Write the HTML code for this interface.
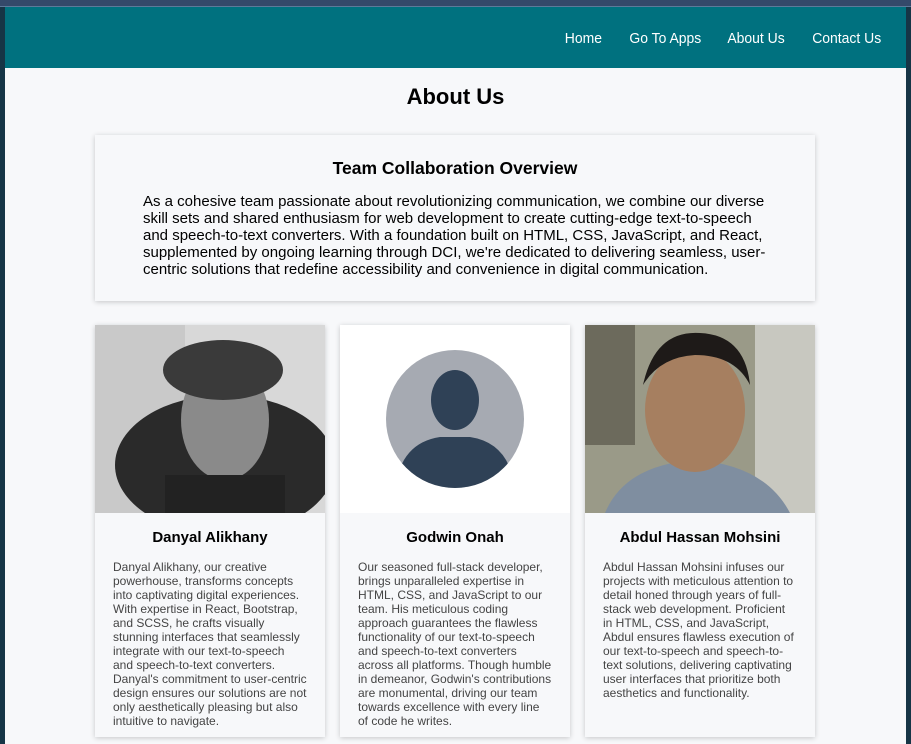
<!DOCTYPE html>
<html><head><meta charset="utf-8"><style>
*{box-sizing:border-box;margin:0;padding:0}
body{width:911px;height:744px;overflow:hidden;background:#163546;font-family:"Liberation Sans",sans-serif;position:relative}
.top{position:absolute;left:0;top:0;width:911px;height:7px;background:#34496a;border-bottom:1px solid #5d7a9a}
.page{position:absolute;left:5px;top:7px;width:901px;height:737px;background:#f7f8fa}
header{height:61px;background:#00717f;display:flex;justify-content:flex-end;align-items:center;padding-right:25px;padding-top:1px}
header a{color:#fff;font-size:15px;margin-left:22px;text-decoration:none;display:inline-block;transform:scaleX(.93);transform-origin:right}
h1{text-align:center;font-size:22px;margin-top:16px;color:#000}
.ov{position:absolute;left:90px;top:128px;width:720px;height:166px;background:#f7f8fa;box-shadow:0 1px 5px rgba(0,0,0,.2);padding:23px 48px 0}
.ov h2{text-align:center;font-size:17.5px;margin-bottom:14px}
.ov p{font-size:15px;line-height:17px;color:#000}
.card{position:absolute;top:318px;width:230px;height:412px;background:#f7f8fa;box-shadow:0 1px 5px rgba(0,0,0,.2)}
.img{height:188px;overflow:hidden}
.card h3{text-align:center;font-size:15px;margin-top:16px;margin-bottom:14px}
.card p{font-size:12px;line-height:14px;color:#444;padding:0 18px}
</style></head><body>
<div class="top"></div>
<div class="page">
<header><a>Home</a><a>Go To Apps</a><a>About Us</a><a>Contact Us</a></header>
<h1>About Us</h1>
<div class="ov"><h2>Team Collaboration Overview</h2><p>As a cohesive team passionate about revolutionizing communication, we combine our diverse skill sets and shared enthusiasm for web development to create cutting-edge text-to-speech and speech-to-text converters. With a foundation built on HTML, CSS, JavaScript, and React, supplemented by ongoing learning through DCI, we're dedicated to delivering seamless, user-centric solutions that redefine accessibility and convenience in digital communication.</p></div>

<div class="card" style="left:90px"><div class="img"><svg width="230" height="188"><rect width="230" height="188" fill="#d8d8d8"/><rect x="0" y="0" width="90" height="188" fill="#c9c9c9"/><ellipse cx="130" cy="140" rx="110" ry="70" fill="#2a2a2a"/><ellipse cx="130" cy="95" rx="44" ry="60" fill="#8a8a8a"/><ellipse cx="128" cy="45" rx="60" ry="30" fill="#3a3a3a"/><rect x="70" y="150" width="120" height="38" fill="#222"/></svg></div><h3>Danyal Alikhany</h3><p>Danyal Alikhany, our creative powerhouse, transforms concepts into captivating digital experiences. With expertise in React, Bootstrap, and SCSS, he crafts visually stunning interfaces that seamlessly integrate with our text-to-speech and speech-to-text converters. Danyal's commitment to user-centric design ensures our solutions are not only aesthetically pleasing but also intuitive to navigate.</p></div>

<div class="card" style="left:335px"><div class="img" style="background:#fff"><svg width="230" height="188"><defs><clipPath id="c"><circle cx="115" cy="94" r="69"/></clipPath></defs><circle cx="115" cy="94" r="69" fill="#a6aab2"/><g clip-path="url(#c)" fill="#2f4156"><ellipse cx="115" cy="75" rx="24" ry="30"/><path d="M55 165 Q60 118 100 112 L130 112 Q170 118 175 165Z"/></g></svg></div><h3>Godwin Onah</h3><p>Our seasoned full-stack developer, brings unparalleled expertise in HTML, CSS, and JavaScript to our team. His meticulous coding approach guarantees the flawless functionality of our text-to-speech and speech-to-text converters across all platforms. Though humble in demeanor, Godwin's contributions are monumental, driving our team towards excellence with every line of code he writes.</p></div>

<div class="card" style="left:580px"><div class="img"><svg width="230" height="188"><rect width="230" height="188" fill="#9a9a88"/><rect x="170" y="0" width="60" height="188" fill="#c8c8c0"/><rect x="0" y="0" width="50" height="120" fill="#6c6a5c"/><path d="M20 188 Q40 140 110 135 Q180 140 205 188Z" fill="#7f8ea0"/><ellipse cx="110" cy="85" rx="50" ry="62" fill="#a67f60"/><path d="M58 60 Q70 5 115 8 Q160 10 165 60 Q150 30 110 30 Q75 32 58 60Z" fill="#1e1a18"/></svg></div><h3>Abdul Hassan Mohsini</h3><p>Abdul Hassan Mohsini infuses our projects with meticulous attention to detail honed through years of full-stack web development. Proficient in HTML, CSS, and JavaScript, Abdul ensures flawless execution of our text-to-speech and speech-to-text solutions, delivering captivating user interfaces that prioritize both aesthetics and functionality.</p></div>
</div>
</body></html>
